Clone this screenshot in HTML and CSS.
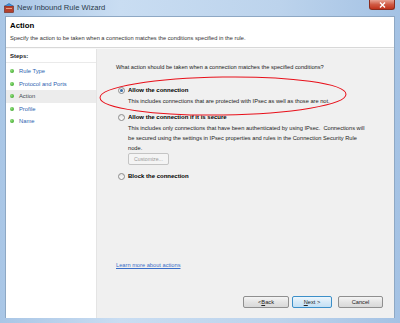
FILE: index.html
```html
<!DOCTYPE html>
<html lang="en">
<head>
  <meta charset="UTF-8">
  <title>New Inbound Rule Wizard</title>
  <link rel="stylesheet" href="styles.css">
</head>
<body>
  <div class="window">
    <div class="titlebar">
      <svg class="app-icon" width="10" height="10" viewBox="0 0 10 10">
        <rect x="0.5" y="3" width="9" height="6.5" fill="#b3412e" stroke="#6e2418" stroke-width="0.6"/>
        <path d="M1 3 L5 0.5 L9 3" fill="#3f8fd8" stroke="#1f5f9e" stroke-width="0.6"/>
        <rect x="2" y="5" width="6" height="1" fill="#e8a080"/>
      </svg>
      <span class="title">New Inbound Rule Wizard</span>
      <div class="close-btn">
        <svg width="7" height="6" viewBox="0 0 7 6"><path d="M1 0.5 L6 5.5 M6 0.5 L1 5.5" stroke="#fff" stroke-width="1.4"/></svg>
      </div>
    </div>

    <div class="client">
      <div class="header">
        <div class="header-title">Action</div>
        <div class="header-sub">Specify the action to be taken when a connection matches the conditions specified in the rule.</div>
      </div>

      <div class="main">
        <div class="steps">
          <div class="steps-title">Steps:</div>
          <div class="step"><span class="dot"></span>Rule Type</div>
          <div class="step"><span class="dot"></span>Protocol and Ports</div>
          <div class="step current"><span class="dot"></span>Action</div>
          <div class="step"><span class="dot"></span>Profile</div>
          <div class="step"><span class="dot"></span>Name</div>
        </div>

        <div class="pane">
          <div class="question">What action should be taken when a connection matches the specified conditions?</div>

          <div class="option">
            <span class="radio checked"></span>
            <div class="option-body">
              <div class="option-label">Allow the connection</div>
              <div class="option-desc">This includes connections that are protected with IPsec as well as those are not.</div>
            </div>
          </div>

          <div class="option">
            <span class="radio"></span>
            <div class="option-body">
              <div class="option-label">Allow the connection if it is secure</div>
              <div class="option-desc">This includes only connections that have been authenticated by using IPsec.&nbsp; Connections will be secured using the settings in IPsec properties and rules in the Connection Security Rule node.</div>
              <div class="customize">Customize...</div>
            </div>
          </div>

          <div class="option">
            <span class="radio"></span>
            <div class="option-body">
              <div class="option-label">Block the connection</div>
            </div>
          </div>

          <div class="spacer"></div>
          <a class="learn" href="#">Learn more about actions</a>

          <div class="buttons">
            <div class="btn">&lt; <u>B</u>ack</div>
            <div class="btn default"><u>N</u>ext &gt;</div>
            <div class="btn cancel">Cancel</div>
          </div>

          <svg class="annotation" width="252" height="44" viewBox="0 0 252 44">
            <ellipse cx="126" cy="21" rx="123" ry="19" fill="none" stroke="#e8101a" stroke-width="1" transform="rotate(-0.8 126 21)"/>
          </svg>
        </div>
      </div>
    </div>
  </div>
</body>
</html>
```

FILE: styles.css
```css
body {
  margin: 0;
  font-family: "Liberation Sans", Arial, sans-serif;
  color: #000;
}
.window {
  width: 400px;
  height: 323px;
  display: flex;
  flex-direction: column;
  background: linear-gradient(to right, #a9c6e6, #c9ddf2 30%, #bcd3ec 70%, #a4c2e4);
  box-sizing: border-box;
  padding: 0 5px 5px 5px;
  overflow: hidden;
}
.titlebar {
  height: 17px;
  display: flex;
  align-items: center;
  position: relative;
  margin: 0 -5px;
  padding-left: 4px;
}
.app-icon {
  margin-right: 3px;
  margin-top: -2px;
}
.title {
  font-size: 7.6px;
  color: #2a3a4a;
  margin-top: -2px;
}
.close-btn {
  position: absolute;
  top: 0;
  right: 5px;
  width: 26px;
  height: 10px;
  background: linear-gradient(to bottom, #e8a394, #d05a44 50%, #c0321c);
  border: 1px solid #8a2c1e;
  border-top: none;
  border-radius: 0 0 3px 3px;
  box-sizing: border-box;
  display: flex;
  align-items: center;
  justify-content: center;
}
.client {
  flex: 1;
  display: flex;
  flex-direction: column;
  background: #f0f0f0;
  border: 1px solid #8ea8c4;
  border-bottom: none;
  margin-top: -1px;
  min-height: 0;
}
.header {
  height: 31px;
  background: #fff;
  border-bottom: 1px solid #d8d8d8;
  padding: 3px 0 0 4px;
  box-sizing: border-box;
}
.header-title {
  font-size: 7.8px;
  font-weight: bold;
  margin-top: 1px;
}
.header-sub {
  font-size: 5.7px;
  color: #333;
  margin-top: 5px;
}
.main {
  flex: 1;
  display: flex;
  border-top: 1px solid #f8f8f8;
}
.steps {
  width: 90px;
  background: #fff;
  border-right: 1px solid #e4e4e4;
  padding-top: 4px;
}
.steps-title {
  font-size: 6px;
  font-weight: bold;
  color: #222;
  padding: 0 0 3px 4px;
  border-bottom: 1px solid #eaeaea;
  margin-bottom: 2px;
}
.step {
  display: flex;
  align-items: center;
  height: 12.5px;
  font-size: 5.8px;
  color: #2d5fb0;
  padding-left: 4px;
}
.step.current {
  background: #ececec;
  color: #404850;
}
.dot {
  width: 4px;
  height: 4px;
  border-radius: 50%;
  background: radial-gradient(circle at 35% 35%, #8fe07a, #2e9a1e);
  margin-right: 5px;
}
.pane {
  flex: 1;
  position: relative;
  display: flex;
  flex-direction: column;
  padding: 15px 11px 10px 19px;
}
.question {
  font-size: 5.7px;
  color: #222;
  margin-bottom: 17px;
}
.option {
  display: flex;
  align-items: flex-start;
  margin-bottom: 8px;
}
.radio {
  width: 5px;
  height: 5px;
  border: 1px solid #8c8c8c;
  border-radius: 50%;
  background: linear-gradient(to bottom, #e4e4e4, #fdfdfd);
  margin: 0 3px 0 2px;
  flex-shrink: 0;
  position: relative;
}
.radio.checked::after {
  content: "";
  position: absolute;
  left: 1px;
  top: 1px;
  width: 3px;
  height: 3px;
  border-radius: 50%;
  background: #3a6fa8;
}
.option-body {
  flex: 1;
}
.option-label {
  font-size: 6px;
  font-weight: bold;
  line-height: 7px;
}
.option-desc {
  font-size: 5.7px;
  color: #222;
  line-height: 10px;
  margin-top: 2px;
  width: 240px;
}
.customize {
  width: 41px;
  height: 12px;
  margin-top: 0;
  border: 1px solid #c4c4c4;
  border-radius: 2px;
  background: #f4f4f4;
  color: #9a9a9a;
  font-size: 5.2px;
  display: flex;
  align-items: center;
  justify-content: center;
  box-sizing: border-box;
}
.spacer {
  flex: 1;
}
.learn {
  font-size: 5.7px;
  color: #3a6ec8;
  text-decoration: underline;
  align-self: flex-start;
}
.buttons {
  display: flex;
  justify-content: flex-end;
  gap: 3px;
  margin-top: 28px;
}
.btn {
  width: 46px;
  height: 12px;
  box-sizing: border-box;
  border: 1px solid #8f8f8f;
  border-radius: 2px;
  background: linear-gradient(to bottom, #f4f4f4, #e4e4e4 50%, #d8d8d8);
  font-size: 5.7px;
  color: #222;
  display: flex;
  align-items: center;
  justify-content: center;
}
.btn.default {
  width: 40px;
  border-color: #3c8fc8;
  background: linear-gradient(to bottom, #eef6fc, #d6eaf8 50%, #c4e0f4);
}
.btn.cancel {
  width: 45px;
  margin-left: 3px;
}
.annotation {
  position: absolute;
  left: 0;
  top: 26px;
}
```
